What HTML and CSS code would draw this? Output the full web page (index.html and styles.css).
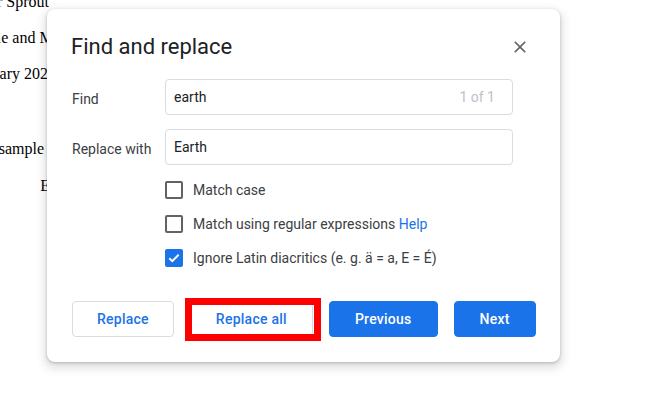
FILE: index.html
```html
<!DOCTYPE html>
<html lang="en">
<head>
  <meta charset="UTF-8" />
  <meta name="viewport" content="width=device-width, initial-scale=1.0"/>
  <title>Find and replace</title>
  <link rel="stylesheet" href="styles.css">
</head>
<body>

  <div class="doc">
    <div class="doc-line w1">Peter Sprout</div>
    <div class="doc-line w2">Kale and Mason</div>
    <div class="doc-line w3">January 2024</div>
    <div class="doc-line gap"></div>
    <div class="doc-line w4">A sample text</div>
    <div class="doc-line w5">Earth</div>
  </div>

  <div class="dialog">
    <div class="dialog-head">
      <h1 class="title">Find and replace</h1>
      <button class="close" aria-label="Close">
        <svg width="20" height="20" viewBox="0 0 24 24"><path fill="#5f6368" d="M19 6.41L17.59 5 12 10.59 6.41 5 5 6.41 10.59 12 5 17.59 6.41 19 12 13.41 17.59 19 19 17.59 13.41 12z"/></svg>
      </button>
    </div>

    <div class="fields">
      <label class="field-label">Find</label>
      <div class="input">
        <span>earth</span>
        <span class="count">1 of 1</span>
      </div>

      <label class="field-label">Replace with</label>
      <div class="input">
        <span>Earth</span>
      </div>
    </div>

    <div class="options">
      <div class="option">
        <span class="box"></span>
        <span>Match case</span>
      </div>
      <div class="option">
        <span class="box"></span>
        <span>Match using regular expressions <a class="help" href="#">Help</a></span>
      </div>
      <div class="option">
        <span class="box checked">
          <svg width="14" height="14" viewBox="0 0 24 24"><path fill="none" stroke="#fff" stroke-width="3.4" d="M4 12.5l5 5L20 6.5"/></svg>
        </span>
        <span>Ignore Latin diacritics (e. g. ä = a, E = É)</span>
      </div>
    </div>

    <div class="actions">
      <button class="btn btn-light">Replace</button>
      <button class="btn btn-light marked">Replace all</button>
      <button class="btn btn-blue btn-wide">Previous</button>
      <button class="btn btn-blue btn-wide">Next</button>
    </div>
  </div>

</body>
</html>
```

FILE: styles.css
```css
body {
  margin: 0px;
  padding: 0px;
  font-family: Roboto, "Liberation Sans", sans-serif;
  background: #fff;
  width: 651px;
  height: 393px;
  overflow: hidden;
  position: relative;
}

/* document text behind the dialog */
.doc {
  margin-top: -16px;
  font: 16px/36px "Liberation Serif", serif;
  color: #000;
}

.doc-line {
  display: flex;
  justify-content: flex-end;
  white-space: nowrap;
  height: 36px;
}

.doc-line.gap {
  height: 39px;
}

.w1 { width: 49px; }
.w2 { width: 83px; }
.w3 { width: 56px; }
.w4 { width: 72px; }
.w5 { width: 75px; margin-top: 1px; }

.dialog {
  position: absolute;
  left: 47px;
  top: 9px;
  width: 513px;
  box-sizing: border-box;
  padding: 24px 25px 25px 24px;
  background: #fff;
  border-radius: 8px;
  box-shadow: 0 4px 8px 3px rgba(60, 64, 67, 0.15), 0 1px 3px rgba(60, 64, 67, 0.3);
}

.dialog-head {
  display: flex;
  align-items: center;
  justify-content: space-between;
}

.title {
  margin: 0;
  font-size: 22px;
  line-height: 28px;
  font-weight: 400;
  color: #202124;
}

.close {
  border: none;
  background: none;
  padding: 0;
  width: 20px;
  height: 20px;
  margin-right: 5px;
  margin-top: -1px;
  cursor: pointer;
}

.close svg {
  display: block;
}

.fields {
  margin-top: 18px;
  display: grid;
  grid-template-columns: 94px 348px;
  grid-auto-rows: 36px;
  row-gap: 14px;
  align-items: center;
}

.field-label {
  font-size: 14px;
  color: #3c4043;
  padding-top: 3px;
  padding-left: 1px;
}

.input {
  height: 36px;
  box-sizing: border-box;
  border: 1px solid #dadce0;
  border-radius: 4px;
  padding: 0 17px 0 8px;
  display: flex;
  align-items: center;
  justify-content: space-between;
  font-size: 14px;
  color: #202124;
}

.count {
  color: #bdc1c6;
}

.options {
  margin-top: 8px;
  padding-left: 94px;
}

.option {
  height: 34px;
  display: flex;
  align-items: center;
  gap: 10px;
  font-size: 14px;
  color: #3c4043;
}

.box {
  width: 18px;
  height: 18px;
  box-sizing: border-box;
  border: 2px solid #5f6368;
  border-radius: 2px;
  display: flex;
  align-items: center;
  justify-content: center;
}

.box.checked {
  background: #1a73e8;
  border-color: #1a73e8;
}

.help {
  color: #1a73e8;
  text-decoration: none;
}

.actions {
  margin-top: 26px;
  display: flex;
  gap: 16px;
  padding-left: 1px;
}

.btn {
  flex: none;
  white-space: nowrap;
  height: 36px;
  padding: 0 24px;
  border-radius: 4px;
  font-family: Roboto, sans-serif;
  font-size: 14px;
  font-weight: 500;
  letter-spacing: 0.25px;
  cursor: pointer;
}

.btn-wide {
  padding: 0 25px;
}

.btn-light {
  background: #fff;
  color: #1a73e8;
  border: 1px solid #dadce0;
}

.btn-blue {
  background: #1a73e8;
  color: #fff;
  border: 1px solid #1a73e8;
}

/* red annotation frame */
.marked {
  position: relative;
  padding: 0 25px;
}

.marked::after {
  content: "";
  position: absolute;
  top: -4px;
  bottom: -5px;
  left: -6px;
  right: -9px;
  border: 7px solid #f00;
}
```
